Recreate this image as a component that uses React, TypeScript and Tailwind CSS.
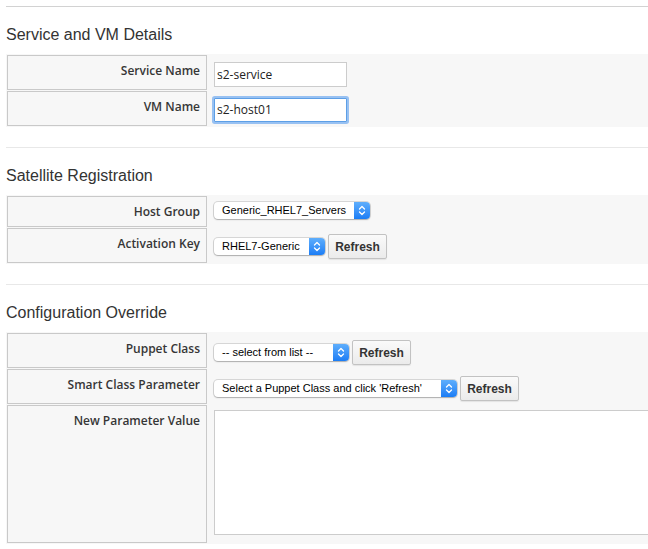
import React from "react";

const Chevrons = () => (
  <svg width="8" height="11" viewBox="0 0 8 11" fill="none">
    <polyline points="1.5,4 4,1.5 6.5,4" stroke="white" strokeWidth="1.3" strokeLinecap="round" strokeLinejoin="round" />
    <polyline points="1.5,7 4,9.5 6.5,7" stroke="white" strokeWidth="1.3" strokeLinecap="round" strokeLinejoin="round" />
  </svg>
);

const Select = ({ text, w }: { text: string; w: string }) => (
  <div
    className={`${w} h-[17px] flex items-stretch rounded-[4px] bg-white shadow-[0_0_0_1px_rgba(0,0,0,0.13),0_1px_1.5px_rgba(0,0,0,0.2)] shrink-0`}
  >
    <div className="flex-1 flex items-center pl-[8px] text-[11px] leading-[17px] text-black font-['Liberation_Sans',Arial,sans-serif] whitespace-nowrap overflow-hidden">
      {text}
    </div>
    <div className="w-[16px] flex items-center justify-center rounded-r-[4px] bg-gradient-to-b from-[#5eaefc] to-[#1a7df5]">
      <Chevrons />
    </div>
  </div>
);

const Button = () => (
  <div className="w-[59px] h-[25px] shrink-0 flex items-center justify-center border border-[#c2c2c2] bg-gradient-to-b from-[#fafafa] to-[#ebebeb] rounded-[2px] shadow-[0_1px_1px_rgba(0,0,0,0.08)] text-[12px] font-bold text-[#333] font-['Liberation_Sans',Arial,sans-serif]">
    Refresh
  </div>
);

const Row = ({
  label,
  h,
  pt,
  children,
}: {
  label: string;
  h: string;
  pt: string;
  children: React.ReactNode;
}) => (
  <div className={`flex ${h}`}>
    <div className="w-[200px] shrink-0 border border-[#c9c9c9] text-right pr-[6px] pt-[6px] leading-[17px] text-[12px] font-semibold text-[#363636] font-['Open_Sans',sans-serif]">
      {label}
    </div>
    <div className={`flex-1 flex items-start gap-[3px] pl-[7px] ${pt}`}>{children}</div>
  </div>
);

const Section = ({
  title,
  hr,
  children,
}: {
  title: string;
  hr: string;
  children: React.ReactNode;
}) => (
  <div className={`border-t ${hr}`}>
    <h2 className="mt-[19px] mb-[10px] leading-[18px] text-[16px] text-[#333] font-['Liberation_Sans',Arial,sans-serif]">
      {title}
    </h2>
    <div className="bg-[#f7f7f7] p-[1px] flex flex-col gap-[1px]">{children}</div>
  </div>
);

export default function App() {
  return (
    <div className="w-[648px] h-[549px] bg-white overflow-hidden pl-[6px] pt-[6px] flex flex-col gap-[20px]">
      <Section title="Service and VM Details" hr="border-[#d2d2d2]">
        <Row label="Service Name" h="h-[35px]" pt="pt-[7px]">
          <div className="w-[133px] h-[25px] border border-[#cccccc] bg-white px-[2px] flex items-center text-[12px] text-[#222] font-['Open_Sans',sans-serif]">
            s2-service
          </div>
        </Row>
        <Row label="VM Name" h="h-[35px]" pt="pt-[7px]">
          <div className="w-[133px] h-[24px] border border-[#5d9fe6] bg-white px-[2px] flex items-center text-[12px] text-[#222] font-['Open_Sans',sans-serif] shadow-[0_0_0_2px_rgba(120,175,240,0.75)] rounded-[1px]">
            s2-host01
          </div>
        </Row>
      </Section>

      <Section title="Satellite Registration" hr="border-[#e8e8e8]">
        <Row label="Host Group" h="h-[31px]" pt="pt-[6px]">
          <Select text="Generic_RHEL7_Servers" w="w-[156px]" />
        </Row>
        <Row label="Activation Key" h="h-[35px]" pt="pt-[6px]">
          <div className="flex items-center gap-[3px]">
            <Select text="RHEL7-Generic" w="w-[111px]" />
            <Button />
          </div>
        </Row>
      </Section>

      <Section title="Configuration Override" hr="border-[#e8e8e8]">
        <Row label="Puppet Class" h="h-[35px]" pt="pt-[7px]">
          <div className="flex items-center gap-[3px]">
            <Select text="-- select from list --" w="w-[135px]" />
            <Button />
          </div>
        </Row>
        <Row label="Smart Class Parameter" h="h-[35px]" pt="pt-[7px]">
          <div className="flex items-center gap-[3px]">
            <Select text="Select a Puppet Class and click 'Refresh'" w="w-[243px]" />
            <Button />
          </div>
        </Row>
        <Row label="New Parameter Value" h="h-[138px]" pt="pt-[5px]">
          <div className="w-[440px] h-[125px] shrink-0 border border-[#cccccc] bg-white" />
        </Row>
      </Section>
    </div>
  );
}
